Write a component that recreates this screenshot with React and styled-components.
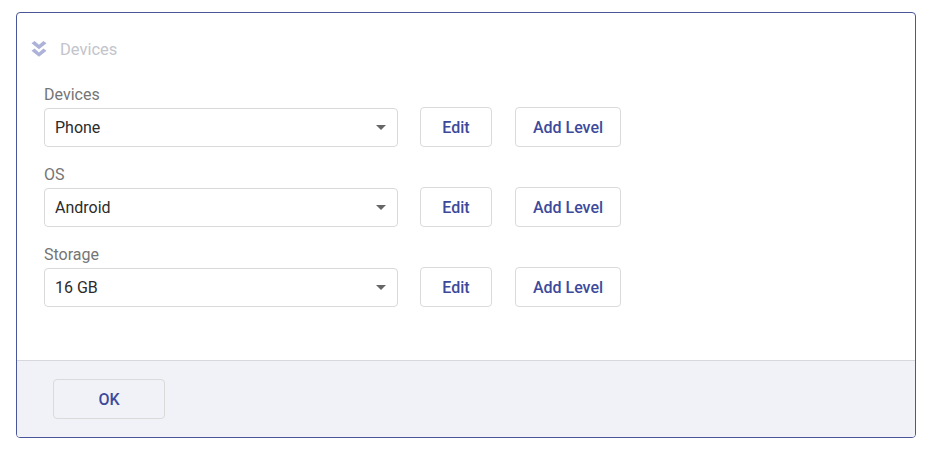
import React from "react";
import styled, { createGlobalStyle } from "styled-components";

const GlobalStyle = createGlobalStyle`
  body {
    margin: 0;
    background: #ffffff;
    font-family: Roboto, "Liberation Sans", sans-serif;
  }
`;

const Page = styled.div`
  padding: 12px 0 0 16px;
`;

const Panel = styled.div`
  width: 900px;
  height: 426px;
  box-sizing: border-box;
  border: 1px solid #4a5697;
  border-radius: 4px;
  display: flex;
  flex-direction: column;
  overflow: hidden;
`;

const Header = styled.div`
  display: flex;
  align-items: center;
  gap: 13px;
  padding: 26px 14px 0;
  height: 20px;
  font-size: 16.5px;
  color: #c3c4cc;
`;

const Body = styled.div`
  flex: 1;
  display: flex;
  flex-direction: column;
  gap: 18px;
  padding: 26px 27px 0;
`;

const Field = styled.div`
  display: flex;
  flex-direction: column;
`;

const Label = styled.div`
  font-size: 16px;
  line-height: 20px;
  color: #757575;
  margin-bottom: 2px;
`;

const Row = styled.div`
  display: flex;
  align-items: center;
`;

const Select = styled.div`
  width: 354px;
  height: 39px;
  box-sizing: border-box;
  border: 1px solid #d9d9d9;
  border-radius: 4px;
  display: flex;
  align-items: center;
  justify-content: space-between;
  padding: 0 11px 0 10px;
  font-size: 16px;
  color: #2b2b2b;
`;

const Caret = styled.span`
  width: 0;
  height: 0;
  border-left: 5.5px solid transparent;
  border-right: 5.5px solid transparent;
  border-top: 5px solid #666666;
`;

const Button = styled.button`
  width: ${p => p.$width}px;
  height: 40px;
  margin-left: ${p => p.$gap || 0}px;
  box-sizing: border-box;
  border: 1px solid #dadada;
  border-radius: 4px;
  background: ${p => p.$bg || "#ffffff"};
  font-family: Roboto, "Liberation Sans", sans-serif;
  font-size: 16px;
  font-weight: 500;
  color: #3d4a9c;
  padding: 0;
  cursor: pointer;
`;

const Footer = styled.div`
  height: 77px;
  box-sizing: border-box;
  border-top: 1px solid #d6d8e0;
  background: #f1f2f7;
  padding: 18px 36px 0;
`;

const ChevronsIcon = () => (
  <svg width="16" height="16" viewBox="0 0 16 16">
    <path d="M0.5 2.2 L3.6 0 L8 3.8 L12.4 0 L15.5 2.2 L8 8.2 Z" fill="#adb3d8" />
    <path d="M0.5 9.8 L3.6 7.6 L8 11.4 L12.4 7.6 L15.5 9.8 L8 15.8 Z" fill="#adb3d8" />
  </svg>
);

const fields = [
  { label: "Devices", value: "Phone" },
  { label: "OS", value: "Android" },
  { label: "Storage", value: "16 GB" },
];

export default function App() {
  return (
    <>
      <GlobalStyle />
      <Page>
        <Panel>
          <Header>
            <ChevronsIcon />
            <span>Devices</span>
          </Header>
          <Body>
            {fields.map(f => (
              <Field key={f.label}>
                <Label>{f.label}</Label>
                <Row>
                  <Select>
                    <span>{f.value}</span>
                    <Caret />
                  </Select>
                  <Button $width={72} $gap={22}>Edit</Button>
                  <Button $width={106} $gap={23}>Add Level</Button>
                </Row>
              </Field>
            ))}
          </Body>
          <Footer>
            <Button $width={112} $bg="#f1f2f7">OK</Button>
          </Footer>
        </Panel>
      </Page>
    </>
  );
}
